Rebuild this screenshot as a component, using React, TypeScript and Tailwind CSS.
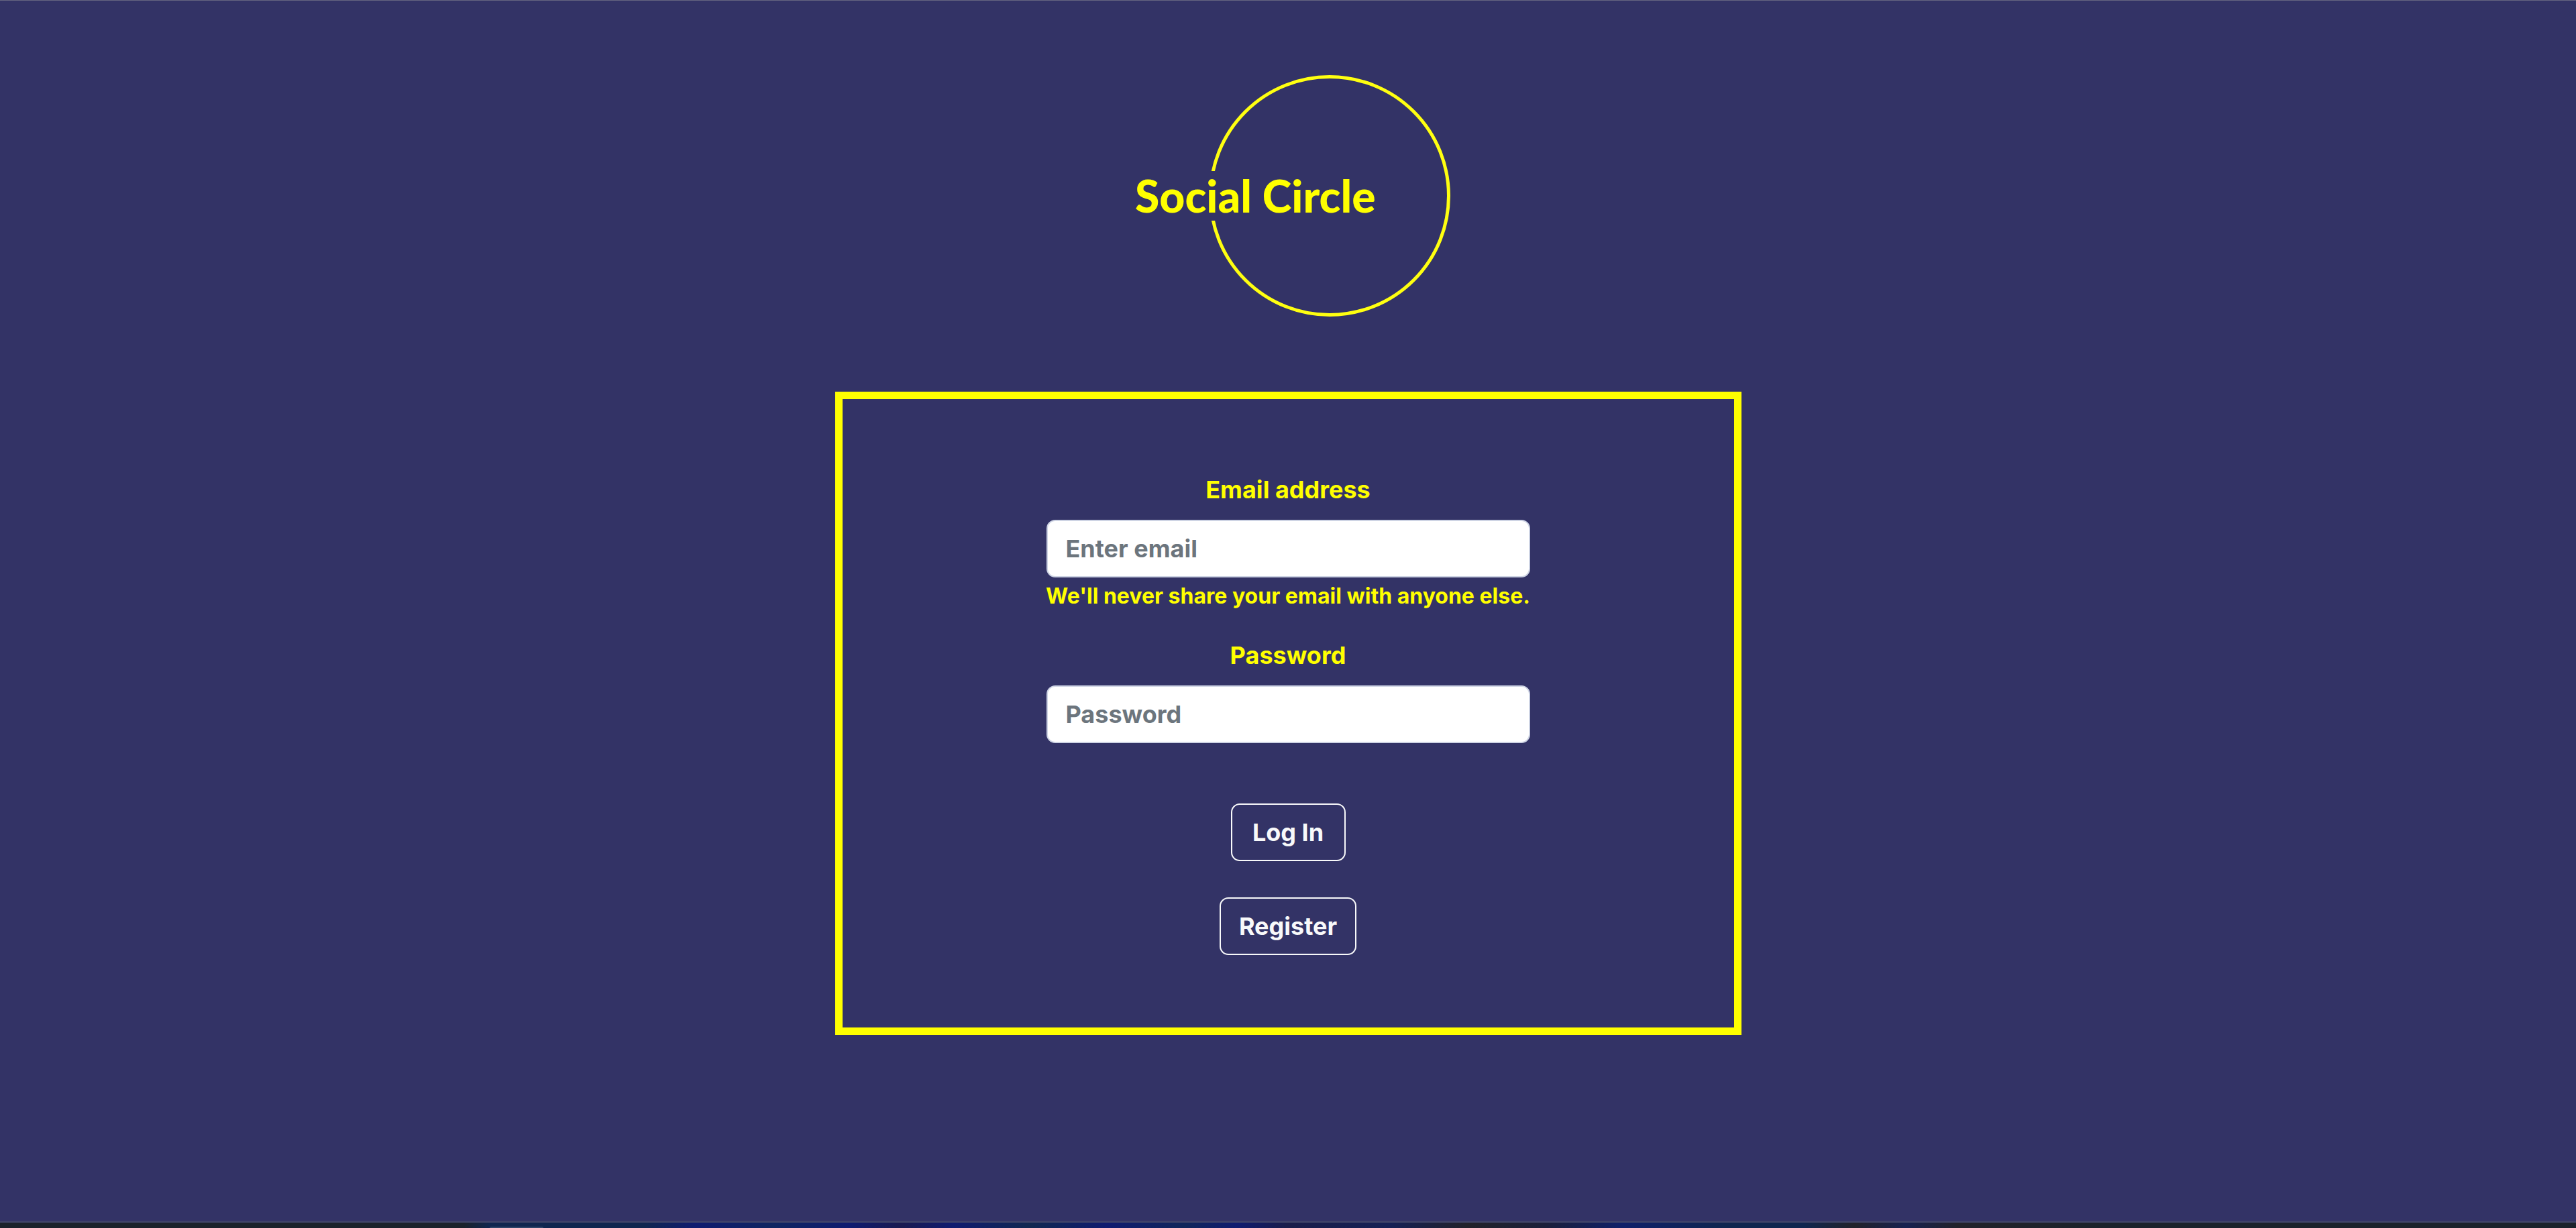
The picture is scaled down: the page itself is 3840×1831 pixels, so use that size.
import type { InputHTMLAttributes } from 'react';

function Logo() {
  return (
    <svg
      className="h-auto w-[484px] max-w-full"
      viewBox="0 0 484 360"
      role="img"
      aria-label="Social Circle"
    >
      <circle cx="304" cy="180" r="177.5" fill="none" stroke="#ffff10" strokeWidth="5" />
      <rect x="118" y="143" width="24" height="74" fill="#333366" />
      <text
        x="14"
        y="205"
        fill="#ffff00"
        fontFamily="Lato, sans-serif"
        fontWeight="900"
        fontSize="66"
      >
        Social Circle
      </text>
    </svg>
  );
}

type FieldProps = InputHTMLAttributes<HTMLInputElement> & { id: string; label: string; hint?: string };

function Field({ id, label, hint, ...input }: FieldProps) {
  return (
    <div className="flex w-full flex-col items-center">
      <label htmlFor={id} className="mb-[18px] text-[36px] leading-[54px]">
        {label}
      </label>
      <input
        id={id}
        aria-describedby={hint ? `${id}-hint` : undefined}
        className="h-[86px] w-full rounded-[13px] border-2 border-[#ced4e4] bg-white px-[27px] text-[36px] font-bold text-[#212529] placeholder:text-[#6c757d] placeholder:opacity-100"
        {...input}
      />
      {hint && (
        <small id={`${id}-hint`} className="mt-1 text-[32px] leading-[48px] whitespace-nowrap">
          {hint}
        </small>
      )}
    </div>
  );
}

const buttonClass =
  'h-[86px] min-w-[171px] rounded-[13px] border-2 border-[#f8f9fa] px-[27px] text-[36px] font-bold text-[#f8f9fa]';

export default function App() {
  return (
    <div className="flex min-h-screen flex-col border-t border-[#666680] bg-[#333366] font-['Inter',sans-serif] font-bold text-[#ffff00]">
      <main className="flex flex-1 flex-col items-center pt-[111px]">
        <Logo />
        <form
          className="mt-28 flex w-full max-w-[1351px] flex-col items-center border-[11px] border-[#ffff00] py-[108px]"
          onSubmit={(e) => e.preventDefault()}
        >
          <div className="flex w-[721px] max-w-full flex-col items-center">
            <Field
              id="email"
              type="email"
              label="Email address"
              placeholder="Enter email"
              hint="We'll never share your email with anyone else."
            />
            <div className="mt-[37px] w-full">
              <Field id="password" type="password" label="Password" placeholder="Password" />
            </div>
            <button type="submit" className={`mt-[90px] ${buttonClass}`}>
              Log In
            </button>
            <button type="button" className={`mt-[54px] ${buttonClass}`}>
              Register
            </button>
          </div>
        </form>
      </main>
      <footer className="flex h-[10px] items-end border-t-2 border-[#42466a] bg-[linear-gradient(90deg,#1b222b_0%,#1b222b_18%,#10264f_19%,#10264f_25%,#0f1b70_27%,#0f2560_30%,#0f1b70_33%,#1a1a50_35%,#0f1b70_37%,#112850_40%,#0f1b70_43%,#10265a_46%,#0f1b70_48%,#1a1d4a_50%,#152055_54%,#22222a_57%,#1b1f3a_60%,#10206a_63%,#10264f_67%,#10264f_70%,#22222a_72%,#172150_74%,#22222a_76%,#1b222b_82%,#1b222b_100%)]">
        <div className="ml-[19%] h-[2px] w-20 rounded-t bg-[#2f4468]" />
      </footer>
    </div>
  );
}
